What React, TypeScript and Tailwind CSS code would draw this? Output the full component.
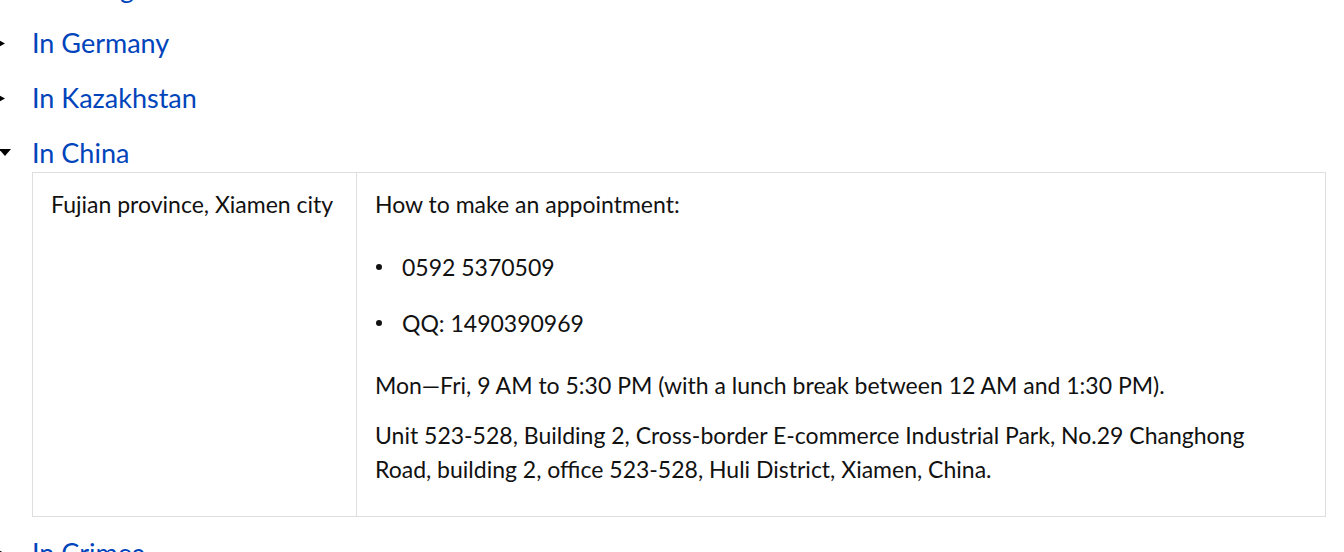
import React from "react";

type Office = { title: string; open?: boolean };

const offices: Office[] = [
  { title: "In Georgia" },
  { title: "In Germany" },
  { title: "In Kazakhstan" },
  { title: "In China", open: true },
  { title: "In Crimea" },
];

function Marker({ open }: { open?: boolean }) {
  if (open) {
    return (
      <svg
        className="absolute left-[-33px] top-[15px]"
        width="12"
        height="7"
        viewBox="0 0 12 7"
      >
        <path d="M0 0 L12 0 L6 7 Z" fill="#000" />
      </svg>
    );
  }
  return (
    <svg
      className="absolute left-[-37px] top-[14px]"
      width="10"
      height="11"
      viewBox="0 0 10 11"
    >
      <path d="M0 0 L10 5.5 L0 11 Z" fill="#000" />
    </svg>
  );
}

function Bullet({ children }: { children: React.ReactNode }) {
  return (
    <li className="flex items-center">
      <span className="ml-[1px] mr-[20px] h-[6px] w-[6px] rounded-full bg-[#111]" />
      <span>{children}</span>
    </li>
  );
}

function ChinaTable() {
  return (
    <div className="flex border border-[#dedede] text-[23px] leading-[34px] text-[#111]">
      <div className="w-[324px] shrink-0 border-r border-[#dedede] px-[18px] pt-[14px]">
        Fujian province, Xiamen city
      </div>
      <div className="flex-1 pl-[18px] pr-[40px] pt-[14px] pb-[30px]">
        <p>How to make an appointment:</p>
        <ul className="mt-[29px] flex flex-col gap-[22px]">
          <Bullet>0592 5370509</Bullet>
          <Bullet>QQ: 1490390969</Bullet>
        </ul>
        <p className="mt-[28px]">
          Mon—Fri, 9 AM to 5:30 PM (with a lunch break between 12 AM and 1:30 PM).
        </p>
        <p className="mt-[16px]">
          Unit 523-528, Building 2, Cross-border E-commerce Industrial Park, No.29
          Changhong Road, building 2, office 523-528, Huli District, Xiamen, China.
        </p>
      </div>
    </div>
  );
}

export default function App() {
  return (
    <div className="h-[552px] w-[1344px] overflow-hidden bg-white font-['Lato',sans-serif]">
      <div className="mt-[-31px] flex flex-col gap-[17px] pl-[32px] pr-[18px]">
        {offices.map((o) => (
          <div key={o.title}>
            <div className="relative h-[38px] text-[27px] leading-[38px] text-[#0044bb]">
              <Marker open={o.open} />
              <span>{o.title}</span>
            </div>
            {o.open && <ChinaTable />}
          </div>
        ))}
      </div>
    </div>
  );
}
